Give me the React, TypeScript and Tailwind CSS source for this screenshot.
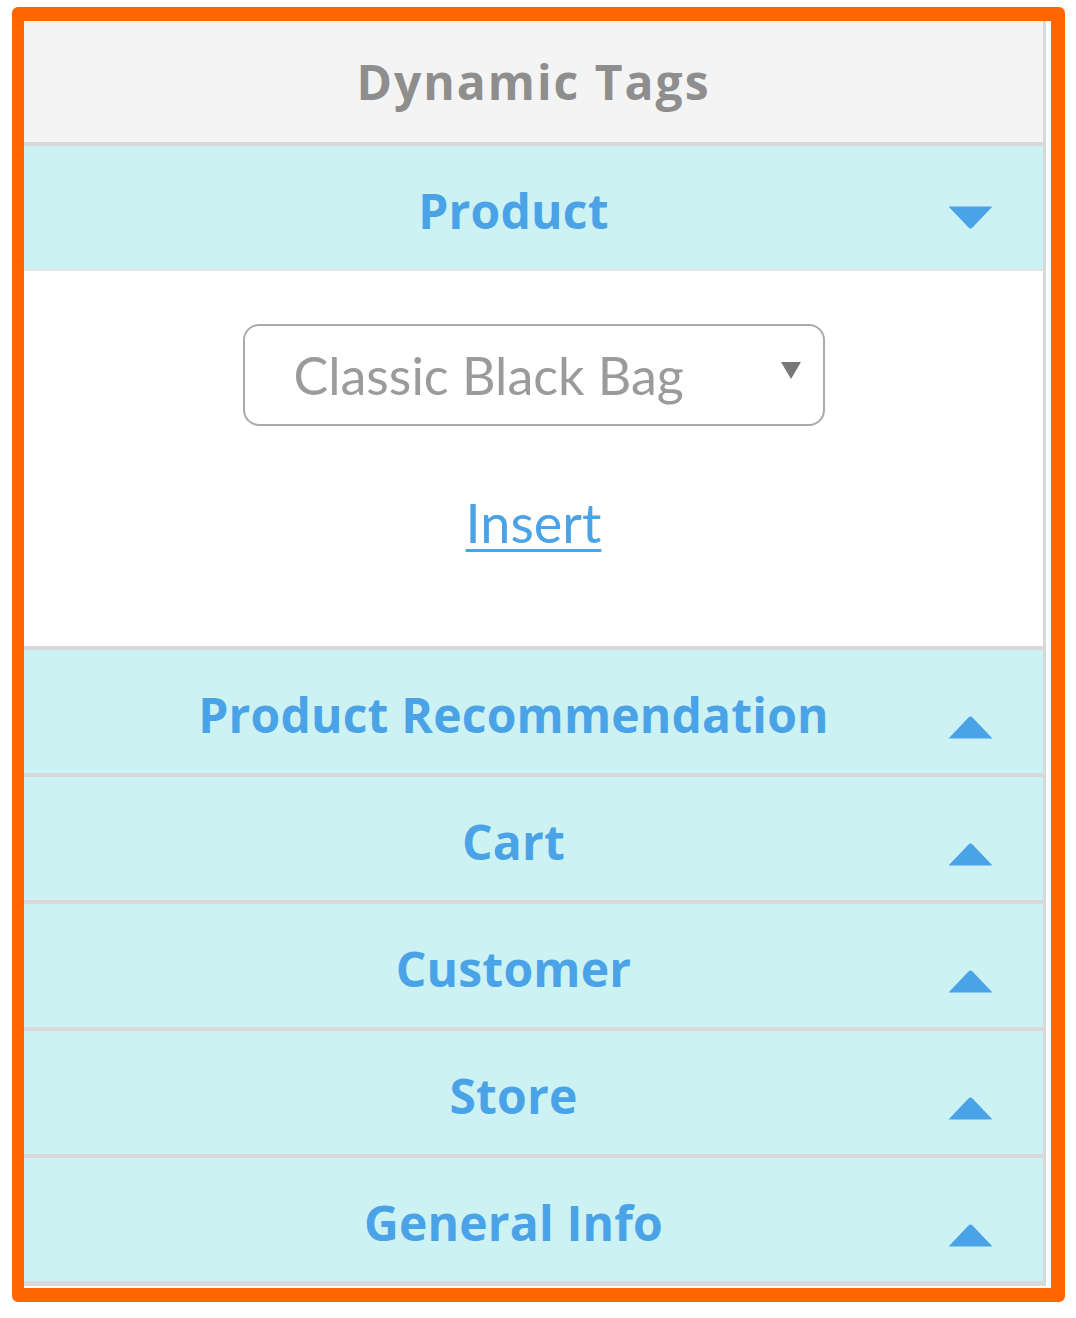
const sections = ["Product Recommendation", "Cart", "Customer", "Store", "General Info"];

function Triangle({ up }: { up?: boolean }) {
  return (
    <svg
      className={`absolute right-[50px] w-[45px] h-[25px] ${up ? "top-[64px]" : "top-[60px]"}`}
      viewBox="0 0 45 25"
    >
      {up ? (
        <path d="M0.5 24.5 L20.5 3.5 Q22.5 1.5 24.5 3.5 L44.5 24.5 Z" fill="#4aa3e6" />
      ) : (
        <path d="M0.5 0.5 L44.5 0.5 L24.5 21.5 Q22.5 23.5 20.5 21.5 Z" fill="#4aa3e6" />
      )}
    </svg>
  );
}

function SectionRow({ title, open }: { title: string; open?: boolean }) {
  return (
    <div
      className={`relative flex items-center justify-center h-[127px] pr-[40px] pt-[7px] bg-[#cdf2f4] border-t-4 border-[#d9d9d9] ${
        open ? "border-b-2 border-b-[#e4e4e4] h-[129px]" : ""
      }`}
    >
      <span className="font-['Open_Sans',sans-serif] font-bold text-[48px] leading-none text-[#4aa3e6] tracking-[0.2px]">
        {title}
      </span>
      <Triangle up={!open} />
    </div>
  );
}

export default function App() {
  return (
    <div className="pl-[12px] pt-[7px] bg-white min-h-screen">
      <div className="w-[1053px] bg-white border-[#ff6600] border-t-[14px] border-l-[12px] border-r-[14px] border-b-[14px] rounded-[6px] pr-[5px] pb-[2px]">
        <div className="flex flex-col border-r-[3px] border-b-[5px] border-[#d9d9d9]">
          <div className="flex items-center justify-center h-[121px] bg-[#f4f4f4]">
            <span className="font-['Open_Sans',sans-serif] font-bold text-[48px] leading-none text-[#8e8e8e] tracking-[2px]">
              Dynamic Tags
            </span>
          </div>
          <SectionRow title="Product" open />
          <div className="flex flex-col items-center h-[375px] bg-white pt-[53px]">
            <div className="relative flex items-center w-[582px] h-[102px] border-2 border-[#aaaaaa] rounded-[16px] pl-[49px]">
              <span className="font-['Lato',sans-serif] text-[52px] leading-none text-[#9b9b9b]">
                Classic Black Bag
              </span>
              <span className="absolute right-[22px] top-[36px] w-0 h-0 border-l-[10px] border-r-[10px] border-t-[17px] border-l-transparent border-r-transparent border-t-[#777777]" />
            </div>
            <a
              href="#"
              className="mt-[70px] font-['Lato',sans-serif] text-[54px] leading-none text-[#4aa3e6] underline decoration-[3px] underline-offset-[6px]"
            >
              Insert
            </a>
          </div>
          {sections.map((s) => (
            <SectionRow key={s} title={s} />
          ))}
        </div>
      </div>
    </div>
  );
}
